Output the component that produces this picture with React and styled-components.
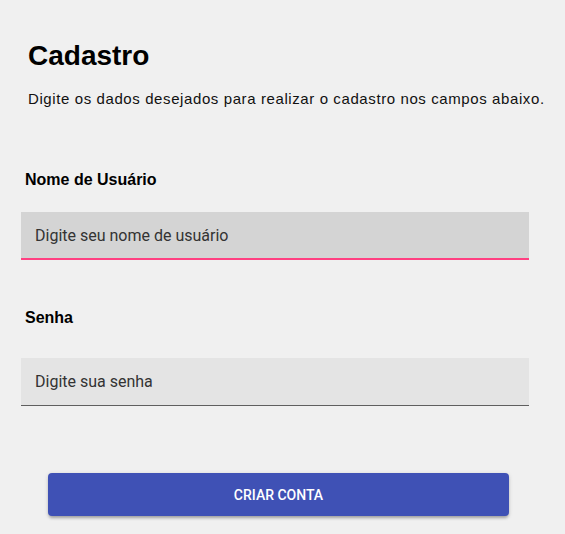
import React from "react";
import styled, { createGlobalStyle } from "styled-components";

const Global = createGlobalStyle`
  html, body { margin: 0; padding: 0; background: #f0f0f0; }
  body { font-family: "Liberation Sans", Arial, sans-serif; }
  * { box-sizing: border-box; }
`;

const Page = styled.div`
  width: 565px;
  min-height: 534px;
  padding: 40px 36px 0 21px;
  display: flex;
  flex-direction: column;
`;

const Title = styled.h1`
  margin: 0 0 0 7px;
  font-family: "Liberation Sans", Arial, sans-serif;
  font-weight: 700;
  font-size: 28px;
  line-height: 32px;
  color: #000;
`;

const Subtitle = styled.p`
  margin: 17px 0 0 7px;
  font-size: 15px;
  letter-spacing: 0.6px;
  line-height: 20px;
  color: #111;
  white-space: nowrap;
`;

const Label = styled.label`
  display: block;
  margin: ${(p) => p.$top}px 0 0 4px;
  font-weight: 700;
  font-size: 16px;
  line-height: 20px;
  color: #000;
`;

const Field = styled.div`
  margin-top: ${(p) => p.$top}px;
  height: 48px;
  background: ${(p) => (p.$focused ? "#d4d4d4" : "#e4e4e4")};
  border-bottom: ${(p) => (p.$focused ? "2px solid #ff4081" : "1px solid #5f5f5f")};
  display: flex;
  align-items: center;
  padding: 0 14px;
`;

const Input = styled.input`
  border: none;
  outline: none;
  background: transparent;
  width: 100%;
  font-family: Roboto, "Liberation Sans", sans-serif;
  font-size: 16px;
  color: #333;
  padding: 0;
  caret-color: #000;
  &::placeholder { color: #333; opacity: 1; }
`;

const ButtonRow = styled.div`
  margin-top: 67px;
  padding: 0 20px 0 27px;
`;

const Button = styled.button`
  width: 100%;
  height: 43px;
  border: none;
  border-radius: 4px;
  background: #3f51b5;
  color: #fff;
  font-family: Roboto, sans-serif;
  font-weight: 500;
  font-size: 14px;
  box-shadow: 0 3px 3px -1px rgba(0,0,0,0.25), 0 1px 4px rgba(0,0,0,0.15);
  cursor: pointer;
`;

export default function App() {
  return (
    <>
      <Global />
      <Page>
        <Title>Cadastro</Title>
        <Subtitle>Digite os dados desejados para realizar o cadastro nos campos abaixo.</Subtitle>
        <Label $top={61}>Nome de Usuário</Label>
        <Field $focused $top={22}>
          <Input autoFocus placeholder="Digite seu nome de usuário" />
        </Field>
        <Label $top={48}>Senha</Label>
        <Field $top={30}>
          <Input type="password" placeholder="Digite sua senha" />
        </Field>
        <ButtonRow>
          <Button>CRIAR CONTA</Button>
        </ButtonRow>
      </Page>
    </>
  );
}
